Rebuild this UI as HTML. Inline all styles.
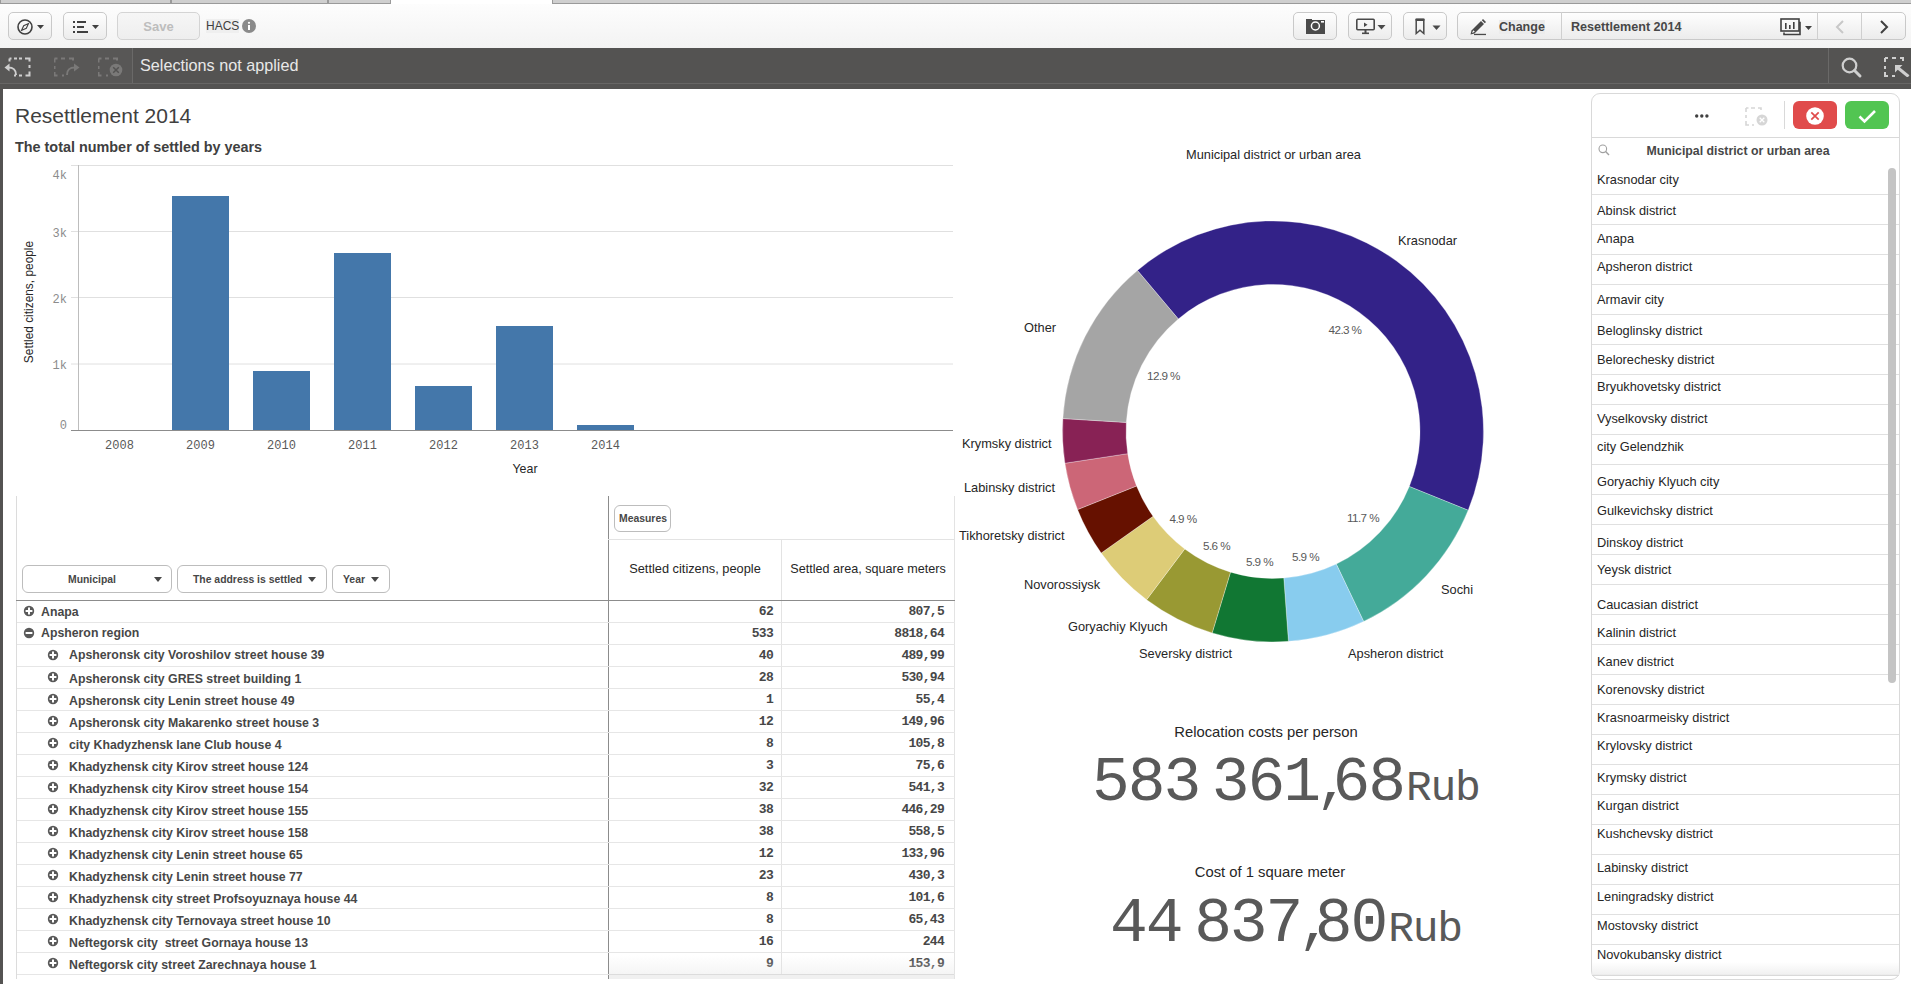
<!DOCTYPE html>
<html><head><meta charset="utf-8">
<style>
*{box-sizing:border-box;margin:0;padding:0}
html,body{width:1911px;height:984px;overflow:hidden;background:#fff;font-family:"Liberation Sans",sans-serif;color:#595959}
.a{position:absolute}
.tab{position:absolute;top:0;height:4px;background:#cfcfcf;border:1px solid #9a9a9a;border-top:none}
#tb{position:absolute;left:0;top:4px;width:1911px;height:44px;background:linear-gradient(#fdfdfd,#f3f3f3)}
.btn{position:absolute;top:12px;height:28px;border:1px solid #c9c9c9;border-radius:5px;background:linear-gradient(#fefefe,#ececec)}
.btn svg{position:absolute}
#sel{position:absolute;left:0;top:48px;width:1911px;height:41px;background:#545352}
.mono{font-family:"Liberation Mono",monospace}
</style></head><body>
<!-- tabs -->
<div class="tab" style="left:0;width:171px"></div>
<div class="tab" style="left:171px;width:157px"></div>
<div class="tab" style="left:328px;width:63px"></div>
<div class="tab" style="left:552px;width:1359px;border-right:none"></div>

<div id="tb"></div>
<!-- left buttons -->
<div class="btn" style="left:8px;width:44px">
 <svg style="left:8px;top:6px" width="30" height="16" viewBox="0 0 30 16"><circle cx="8" cy="8" r="7" fill="none" stroke="#404040" stroke-width="1.6"/><path d="M11.5 4.5 L9.3 9.3 L4.5 11.5 L6.7 6.7 Z" fill="none" stroke="#404040" stroke-width="1.1"/><path d="M20 6 h7 l-3.5 4z" fill="#404040"/></svg>
</div>
<div class="btn" style="left:63px;width:44px">
 <svg style="left:8px;top:6px" width="30" height="16" viewBox="0 0 30 16"><rect x="1" y="2" width="2" height="2" fill="#404040"/><rect x="5" y="2" width="9" height="2" fill="#404040"/><rect x="1" y="7" width="2" height="2" fill="#404040"/><rect x="5" y="7" width="7" height="2" fill="#404040"/><rect x="1" y="12" width="2" height="2" fill="#404040"/><rect x="5" y="12" width="11" height="2" fill="#404040"/><path d="M20 6 h7 l-3.5 4z" fill="#404040"/></svg>
</div>
<div class="btn" style="left:117px;width:83px;background:linear-gradient(#f6f6f6,#eeeeee);border-color:#d4d4d4"><div class="a" style="left:0;width:81px;top:6px;text-align:center;font-size:13px;font-weight:bold;color:#bdbdbd">Save</div></div>
<div class="a" style="left:206px;top:19px;font-size:12px;color:#404040;background:#efefef">HACS</div>
<svg class="a" style="left:242px;top:19px" width="14" height="14" viewBox="0 0 14 14"><circle cx="7" cy="7" r="7" fill="#8a8a8a"/><rect x="6" y="6" width="2" height="5" fill="#fff"/><circle cx="7" cy="3.8" r="1.1" fill="#fff"/></svg>

<!-- right buttons -->
<div class="btn" style="left:1293px;width:44px">
 <svg style="left:12px;top:5px" width="20" height="17" viewBox="0 0 20 17"><path d="M0 1 h6 v1 h13 v14 h-19z" fill="#4a4a4a"/><circle cx="9.4" cy="8" r="4" fill="none" stroke="#fff" stroke-width="1.5"/><rect x="15" y="3" width="3" height="1.6" fill="#fff"/></svg>
</div>
<div class="btn" style="left:1348px;width:44px">
 <svg style="left:7px;top:5px" width="30" height="17" viewBox="0 0 30 17"><rect x="0.8" y="1.2" width="17.4" height="10.6" rx="1" fill="none" stroke="#4a4a4a" stroke-width="1.6"/><path d="M8 4.5 v4.5 l3.5-2.25z" fill="#4a4a4a"/><rect x="8.5" y="12" width="2" height="3" fill="#4a4a4a"/><rect x="6" y="14.5" width="7" height="1.6" fill="#4a4a4a"/><path d="M21.5 7 h8 l-4 4.5z" fill="#4a4a4a"/></svg>
</div>
<div class="btn" style="left:1403px;width:44px">
 <svg style="left:10px;top:5px" width="30" height="17" viewBox="0 0 30 17"><path d="M2.2 1.5 h7.6 v14 l-3.8-3.2 l-3.8 3.2z" fill="none" stroke="#4a4a4a" stroke-width="1.5"/><rect x="1.5" y="0.5" width="9" height="2.5" rx="1" fill="#4a4a4a"/><path d="M18.5 7.5 h8 l-4 4.5z" fill="#4a4a4a"/></svg>
</div>
<div class="btn" style="left:1457px;width:449px">
 <div class="a" style="left:103px;top:-1px;width:1px;height:28px;background:#cfcfcf"></div>
 <div class="a" style="left:359px;top:-1px;width:1px;height:28px;background:#cfcfcf"></div>
 <div class="a" style="left:403px;top:-1px;width:1px;height:28px;background:#cfcfcf"></div>
 <svg style="left:11px;top:5px" width="18" height="18" viewBox="0 0 18 18"><path d="M1.5 16.5 L2.5 12.5 L12 3 L15 6 L5.5 15.5 Z" fill="#4a4a4a"/><path d="M12.8 2.2 L14 1 L17 4 L15.8 5.2 Z" fill="#4a4a4a"/><path d="M3 15 l1.2-2.8 l1.6 1.6z" fill="#fff"/><rect x="5" y="15.8" width="12" height="1.3" fill="#4a4a4a"/></svg>
 <div class="a" style="left:41px;top:7px;font-size:12.5px;font-weight:bold;color:#474747;background:#ececec">Change</div>
 <div class="a" style="left:113px;top:7px;font-size:12.6px;font-weight:bold;color:#474747;background:#efefef">Resettlement 2014</div>
 <svg style="left:322px;top:5px" width="34" height="18" viewBox="0 0 34 18"><rect x="1" y="1" width="18" height="12" fill="none" stroke="#404040" stroke-width="1.6"/><path d="M4 14.5 v2 h16 v-12 h-1" fill="none" stroke="#404040" stroke-width="1.6"/><rect x="5" y="5" width="1.6" height="6" fill="#404040"/><rect x="9" y="7" width="1.6" height="4" fill="#404040"/><rect x="13" y="4" width="1.6" height="7" fill="#404040"/><path d="M25 8 h7 l-3.5 4z" fill="#404040"/></svg>
 <svg style="left:375px;top:6px" width="14" height="16" viewBox="0 0 14 16"><path d="M10 2 L4 8 L10 14" fill="none" stroke="#c8c8c8" stroke-width="2"/></svg>
 <svg style="left:419px;top:6px" width="14" height="16" viewBox="0 0 14 16"><path d="M4 2 L10 8 L4 14" fill="none" stroke="#404040" stroke-width="2"/></svg>
</div>

<!-- selection bar -->
<div id="sel">
 <div class="a" style="left:0;top:0;width:132px;height:35px;background:#585756"></div>
 <div class="a" style="left:132px;top:0;width:1px;height:35px;background:#6a6968"></div>
 <div class="a" style="left:0;top:35px;width:1911px;height:1px;background:#676665"></div>
 <div class="a" style="left:1828px;top:0;width:1px;height:35px;background:#6a6968"></div>
 <div class="a" style="left:140px;top:8px;font-size:16.2px;color:#e8e8e8">Selections not applied</div>

 <svg class="a" style="left:4px;top:9px" width="28" height="20" viewBox="0 0 28 20"><path d="M10 1.5 h3 M15 1.5 h3 M21 1.5 h4.5 v3 M25.5 8 v3 M25.5 14.5 v4 h-4 M18 18.5 h-3 M10 18.5 h2 M5.5 1.5 h2" stroke="#cfcfcf" stroke-width="2" fill="none"/><path d="M5.5 1.5 v3" stroke="#cfcfcf" stroke-width="2"/><path d="M12 18 C12 12 9 10.5 4 10.5" fill="none" stroke="#cfcfcf" stroke-width="2"/><path d="M0.5 10.5 L5.5 6.5 L5.5 14.5 Z" fill="#cfcfcf"/></svg>
 <svg class="a" style="left:54px;top:9px" width="28" height="20" viewBox="0 0 28 20"><path d="M0.5 1.5 h3 M7 1.5 h4 M15 1.5 h4 v2 M0.5 1.5 v4 M0.5 9 v3 M0.5 15 v3.5 h3 M8 18.5 h2" stroke="#7a7978" stroke-width="2" fill="none"/><path d="M13 18 C13 12 16 10.5 21 10.5" fill="none" stroke="#7a7978" stroke-width="2"/><path d="M25.5 10.5 L20 6.5 L20 14.5 Z" fill="#7a7978"/></svg>
 <svg class="a" style="left:98px;top:9px" width="28" height="20" viewBox="0 0 28 20"><path d="M0.5 1.5 h3 M7 1.5 h4 M15 1.5 h4 v2 M0.5 1.5 v4 M0.5 9 v3 M0.5 15 v3.5 h3 M8 18.5 h2" stroke="#7a7978" stroke-width="2" fill="none"/><circle cx="18" cy="13" r="6.3" fill="#7a7978"/><path d="M15.2 10.2 l5.6 5.6 M20.8 10.2 l-5.6 5.6" stroke="#545352" stroke-width="1.5"/></svg>
 <svg class="a" style="left:1841px;top:9px" width="22" height="22" viewBox="0 0 22 22"><circle cx="8.5" cy="8.5" r="6.8" fill="none" stroke="#cfcfcf" stroke-width="2.2"/><path d="M13.5 13.5 L19 19" stroke="#cfcfcf" stroke-width="3" stroke-linecap="round"/></svg>
 <svg class="a" style="left:1884px;top:9px" width="27" height="20" viewBox="0 0 27 20"><path d="M1 1 h3 M8 1 h4 M16 1 h3 v3 M1 1 v4 M1 9 v3 M1 15 v4 h3 M8 19 h3" stroke="#cfcfcf" stroke-width="2" fill="none"/><path d="M11 8 L18.5 8 L11 15.5 Z" fill="#cfcfcf"/><path d="M13.5 10.5 L24.5 19.5" stroke="#cfcfcf" stroke-width="3"/></svg>
</div>

<!-- content -->
<div class="a" style="left:0;top:89px;width:3px;height:895px;background:#545352"></div>

<div class="a" style="left:15px;top:104px;font-size:21px;color:#404040;white-space:nowrap">Resettlement 2014</div>
<div class="a" style="left:15px;top:139px;font-size:14.4px;font-weight:bold;color:#404040;white-space:nowrap">The total number of settled by years</div>
<svg class="a" style="left:0;top:89px" width="960" height="400" viewBox="0 89 960 400">
<line x1="71" y1="165.5" x2="953" y2="165.5" stroke="#e0e0e0" stroke-width="1"/>
<line x1="71" y1="231.5" x2="953" y2="231.5" stroke="#e0e0e0" stroke-width="1"/>
<line x1="71" y1="297.5" x2="953" y2="297.5" stroke="#e0e0e0" stroke-width="1"/>
<line x1="71" y1="364" x2="953" y2="364" stroke="#e0e0e0" stroke-width="1"/>
<line x1="78.5" y1="165" x2="78.5" y2="430" stroke="#bdbdbd" stroke-width="1"/>
<line x1="71" y1="430.5" x2="953" y2="430.5" stroke="#8c8c8c" stroke-width="1"/>
<rect x="172" y="196" width="57" height="234" fill="#4477aa"/>
<rect x="253" y="371" width="57" height="59" fill="#4477aa"/>
<rect x="334" y="253" width="57" height="177" fill="#4477aa"/>
<rect x="415" y="386" width="57" height="44" fill="#4477aa"/>
<rect x="496" y="326" width="57" height="104" fill="#4477aa"/>
<rect x="577" y="425" width="57" height="5" fill="#4477aa"/>
</svg>
<div class="a mono" style="right:1844px;top:168px;font-size:12px;color:#8c8c8c;line-height:16px">4k</div>
<div class="a mono" style="right:1844px;top:226px;font-size:12px;color:#8c8c8c;line-height:16px">3k</div>
<div class="a mono" style="right:1844px;top:292px;font-size:12px;color:#8c8c8c;line-height:16px">2k</div>
<div class="a mono" style="right:1844px;top:358px;font-size:12px;color:#8c8c8c;line-height:16px">1k</div>
<div class="a mono" style="right:1844px;top:418px;font-size:12px;color:#8c8c8c;line-height:16px">0</div>
<div class="a mono" style="left:89.5px;width:60px;text-align:center;top:438px;font-size:12px;color:#595959;line-height:16px">2008</div>
<div class="a mono" style="left:170.5px;width:60px;text-align:center;top:438px;font-size:12px;color:#595959;line-height:16px">2009</div>
<div class="a mono" style="left:251.5px;width:60px;text-align:center;top:438px;font-size:12px;color:#595959;line-height:16px">2010</div>
<div class="a mono" style="left:332.5px;width:60px;text-align:center;top:438px;font-size:12px;color:#595959;line-height:16px">2011</div>
<div class="a mono" style="left:413.5px;width:60px;text-align:center;top:438px;font-size:12px;color:#595959;line-height:16px">2012</div>
<div class="a mono" style="left:494.5px;width:60px;text-align:center;top:438px;font-size:12px;color:#595959;line-height:16px">2013</div>
<div class="a mono" style="left:575.5px;width:60px;text-align:center;top:438px;font-size:12px;color:#595959;line-height:16px">2014</div>
<div class="a" style="left:485px;width:80px;text-align:center;top:461px;font-size:12.4px;color:#262626;line-height:16px">Year</div>
<div class="a" style="left:-41px;top:294px;width:140px;text-align:center;white-space:nowrap;font-size:11.9px;color:#262626;line-height:16px;transform:rotate(-90deg)">Settled citizens, people</div>
<style>.tl{position:absolute;font-size:12.3px;font-weight:bold;color:#474747;white-space:nowrap;line-height:16px}.tn{position:absolute;font-family:"Liberation Mono",monospace;font-size:13px;letter-spacing:-0.7px;font-weight:bold;color:#474747;text-align:right;line-height:18px;white-space:nowrap}.fb{position:absolute;top:565px;height:28px;border:1px solid #bdbdbd;border-radius:6px;background:#fff}.fb span{position:absolute;top:8px;font-size:10.4px;font-weight:bold;color:#474747;white-space:nowrap}</style>
<div class="a" style="left:16px;top:496px;width:1px;height:483px;background:#dcdcdc"></div>
<div class="a" style="left:608px;top:496px;width:1px;height:483px;background:#8c8c8c"></div>
<div class="a" style="left:954px;top:496px;width:1px;height:483px;background:#e3e3e3"></div>
<div class="a" style="left:608px;top:539px;width:346px;height:1px;background:#e3e3e3"></div>
<div class="a" style="left:781px;top:539px;width:1px;height:440px;background:#e3e3e3"></div>
<div class="a" style="left:16px;top:600px;width:939px;height:1px;background:#8c8c8c"></div>
<div class="fb" style="left:22px;width:150px"><span style="left:45px">Municipal</span><svg class="a" style="left:131px;top:11px" width="8" height="5" viewBox="0 0 8 5"><path d="M0 0h8l-4 5z" fill="#474747"/></svg></div>
<div class="fb" style="left:177px;width:150px"><span style="left:15px">The address is settled</span><svg class="a" style="left:130px;top:11px" width="8" height="5" viewBox="0 0 8 5"><path d="M0 0h8l-4 5z" fill="#474747"/></svg></div>
<div class="fb" style="left:332px;width:58px"><span style="left:10px">Year</span><svg class="a" style="left:38px;top:11px" width="8" height="5" viewBox="0 0 8 5"><path d="M0 0h8l-4 5z" fill="#474747"/></svg></div>
<div class="fb" style="left:614px;top:505px;width:57px;height:27px"><span style="left:4px;top:7px">Measures</span></div>
<div class="a" style="left:609px;top:561px;width:172px;text-align:center;font-size:12.8px;color:#262626;white-space:nowrap">Settled citizens, people</div>
<div class="a" style="left:782px;top:562px;width:172px;text-align:center;font-size:12.6px;color:#262626;white-space:nowrap">Settled area, square meters</div>
<div class="a" style="left:17px;top:622px;width:938px;height:1px;background:#e6e6e6"></div>
<svg class="a" style="left:23px;top:605px" width="12" height="12" viewBox="0 0 12 12"><circle cx="6" cy="6" r="5.2" fill="#595959"/><path d="M6 2.6v6.8M2.6 6h6.8" stroke="#fff" stroke-width="2"/></svg>
<div class="tl" style="left:41px;top:603.5px">Anapa</div>
<div class="tn" style="right:1138px;top:603px">62</div>
<div class="tn" style="right:967px;top:603px">807,5</div>
<div class="a" style="left:17px;top:644px;width:938px;height:1px;background:#e6e6e6"></div>
<svg class="a" style="left:23px;top:627px" width="12" height="12" viewBox="0 0 12 12"><circle cx="6" cy="6" r="5.2" fill="#595959"/><path d="M2.6 6h6.8" stroke="#fff" stroke-width="2"/></svg>
<div class="tl" style="left:41px;top:624.5px">Apsheron region</div>
<div class="tn" style="right:1138px;top:625px">533</div>
<div class="tn" style="right:967px;top:625px">8818,64</div>
<div class="a" style="left:17px;top:666px;width:938px;height:1px;background:#e6e6e6"></div>
<svg class="a" style="left:47px;top:649px" width="12" height="12" viewBox="0 0 12 12"><circle cx="6" cy="6" r="5.2" fill="#595959"/><path d="M6 2.6v6.8M2.6 6h6.8" stroke="#fff" stroke-width="2"/></svg>
<div class="tl" style="left:69px;top:646.5px">Apsheronsk city Voroshilov street house 39</div>
<div class="tn" style="right:1138px;top:647px">40</div>
<div class="tn" style="right:967px;top:647px">489,99</div>
<div class="a" style="left:17px;top:688px;width:938px;height:1px;background:#e6e6e6"></div>
<svg class="a" style="left:47px;top:671px" width="12" height="12" viewBox="0 0 12 12"><circle cx="6" cy="6" r="5.2" fill="#595959"/><path d="M6 2.6v6.8M2.6 6h6.8" stroke="#fff" stroke-width="2"/></svg>
<div class="tl" style="left:69px;top:671.3px">Apsheronsk city GRES street building 1</div>
<div class="tn" style="right:1138px;top:669px">28</div>
<div class="tn" style="right:967px;top:669px">530,94</div>
<div class="a" style="left:17px;top:710px;width:938px;height:1px;background:#e6e6e6"></div>
<svg class="a" style="left:47px;top:693px" width="12" height="12" viewBox="0 0 12 12"><circle cx="6" cy="6" r="5.2" fill="#595959"/><path d="M6 2.6v6.8M2.6 6h6.8" stroke="#fff" stroke-width="2"/></svg>
<div class="tl" style="left:69px;top:693.3px">Apsheronsk city Lenin street house 49</div>
<div class="tn" style="right:1138px;top:691px">1</div>
<div class="tn" style="right:967px;top:691px">55,4</div>
<div class="a" style="left:17px;top:732px;width:938px;height:1px;background:#e6e6e6"></div>
<svg class="a" style="left:47px;top:715px" width="12" height="12" viewBox="0 0 12 12"><circle cx="6" cy="6" r="5.2" fill="#595959"/><path d="M6 2.6v6.8M2.6 6h6.8" stroke="#fff" stroke-width="2"/></svg>
<div class="tl" style="left:69px;top:715.3px">Apsheronsk city Makarenko street house 3</div>
<div class="tn" style="right:1138px;top:713px">12</div>
<div class="tn" style="right:967px;top:713px">149,96</div>
<div class="a" style="left:17px;top:754px;width:938px;height:1px;background:#e6e6e6"></div>
<svg class="a" style="left:47px;top:737px" width="12" height="12" viewBox="0 0 12 12"><circle cx="6" cy="6" r="5.2" fill="#595959"/><path d="M6 2.6v6.8M2.6 6h6.8" stroke="#fff" stroke-width="2"/></svg>
<div class="tl" style="left:69px;top:737.3px">city Khadyzhensk lane Club house 4</div>
<div class="tn" style="right:1138px;top:735px">8</div>
<div class="tn" style="right:967px;top:735px">105,8</div>
<div class="a" style="left:17px;top:776px;width:938px;height:1px;background:#e6e6e6"></div>
<svg class="a" style="left:47px;top:759px" width="12" height="12" viewBox="0 0 12 12"><circle cx="6" cy="6" r="5.2" fill="#595959"/><path d="M6 2.6v6.8M2.6 6h6.8" stroke="#fff" stroke-width="2"/></svg>
<div class="tl" style="left:69px;top:759.3px">Khadyzhensk city Kirov street house 124</div>
<div class="tn" style="right:1138px;top:757px">3</div>
<div class="tn" style="right:967px;top:757px">75,6</div>
<div class="a" style="left:17px;top:798px;width:938px;height:1px;background:#e6e6e6"></div>
<svg class="a" style="left:47px;top:781px" width="12" height="12" viewBox="0 0 12 12"><circle cx="6" cy="6" r="5.2" fill="#595959"/><path d="M6 2.6v6.8M2.6 6h6.8" stroke="#fff" stroke-width="2"/></svg>
<div class="tl" style="left:69px;top:781.3px">Khadyzhensk city Kirov street house 154</div>
<div class="tn" style="right:1138px;top:779px">32</div>
<div class="tn" style="right:967px;top:779px">541,3</div>
<div class="a" style="left:17px;top:820px;width:938px;height:1px;background:#e6e6e6"></div>
<svg class="a" style="left:47px;top:803px" width="12" height="12" viewBox="0 0 12 12"><circle cx="6" cy="6" r="5.2" fill="#595959"/><path d="M6 2.6v6.8M2.6 6h6.8" stroke="#fff" stroke-width="2"/></svg>
<div class="tl" style="left:69px;top:803.3px">Khadyzhensk city Kirov street house 155</div>
<div class="tn" style="right:1138px;top:801px">38</div>
<div class="tn" style="right:967px;top:801px">446,29</div>
<div class="a" style="left:17px;top:842px;width:938px;height:1px;background:#e6e6e6"></div>
<svg class="a" style="left:47px;top:825px" width="12" height="12" viewBox="0 0 12 12"><circle cx="6" cy="6" r="5.2" fill="#595959"/><path d="M6 2.6v6.8M2.6 6h6.8" stroke="#fff" stroke-width="2"/></svg>
<div class="tl" style="left:69px;top:825.3px">Khadyzhensk city Kirov street house 158</div>
<div class="tn" style="right:1138px;top:823px">38</div>
<div class="tn" style="right:967px;top:823px">558,5</div>
<div class="a" style="left:17px;top:864px;width:938px;height:1px;background:#e6e6e6"></div>
<svg class="a" style="left:47px;top:847px" width="12" height="12" viewBox="0 0 12 12"><circle cx="6" cy="6" r="5.2" fill="#595959"/><path d="M6 2.6v6.8M2.6 6h6.8" stroke="#fff" stroke-width="2"/></svg>
<div class="tl" style="left:69px;top:847.3px">Khadyzhensk city Lenin street house 65</div>
<div class="tn" style="right:1138px;top:845px">12</div>
<div class="tn" style="right:967px;top:845px">133,96</div>
<div class="a" style="left:17px;top:886px;width:938px;height:1px;background:#e6e6e6"></div>
<svg class="a" style="left:47px;top:869px" width="12" height="12" viewBox="0 0 12 12"><circle cx="6" cy="6" r="5.2" fill="#595959"/><path d="M6 2.6v6.8M2.6 6h6.8" stroke="#fff" stroke-width="2"/></svg>
<div class="tl" style="left:69px;top:869.3px">Khadyzhensk city Lenin street house 77</div>
<div class="tn" style="right:1138px;top:867px">23</div>
<div class="tn" style="right:967px;top:867px">430,3</div>
<div class="a" style="left:17px;top:908px;width:938px;height:1px;background:#e6e6e6"></div>
<svg class="a" style="left:47px;top:891px" width="12" height="12" viewBox="0 0 12 12"><circle cx="6" cy="6" r="5.2" fill="#595959"/><path d="M6 2.6v6.8M2.6 6h6.8" stroke="#fff" stroke-width="2"/></svg>
<div class="tl" style="left:69px;top:891.3px">Khadyzhensk city street Profsoyuznaya house 44</div>
<div class="tn" style="right:1138px;top:889px">8</div>
<div class="tn" style="right:967px;top:889px">101,6</div>
<div class="a" style="left:17px;top:930px;width:938px;height:1px;background:#e6e6e6"></div>
<svg class="a" style="left:47px;top:913px" width="12" height="12" viewBox="0 0 12 12"><circle cx="6" cy="6" r="5.2" fill="#595959"/><path d="M6 2.6v6.8M2.6 6h6.8" stroke="#fff" stroke-width="2"/></svg>
<div class="tl" style="left:69px;top:913.3px">Khadyzhensk city Ternovaya street house 10</div>
<div class="tn" style="right:1138px;top:911px">8</div>
<div class="tn" style="right:967px;top:911px">65,43</div>
<div class="a" style="left:17px;top:952px;width:938px;height:1px;background:#e6e6e6"></div>
<svg class="a" style="left:47px;top:935px" width="12" height="12" viewBox="0 0 12 12"><circle cx="6" cy="6" r="5.2" fill="#595959"/><path d="M6 2.6v6.8M2.6 6h6.8" stroke="#fff" stroke-width="2"/></svg>
<div class="tl" style="left:69px;top:935.3px">Neftegorsk city&nbsp; street Gornaya house 13</div>
<div class="tn" style="right:1138px;top:933px">16</div>
<div class="tn" style="right:967px;top:933px">244</div>
<div class="a" style="left:17px;top:974px;width:938px;height:1px;background:#e6e6e6"></div>
<svg class="a" style="left:47px;top:957px" width="12" height="12" viewBox="0 0 12 12"><circle cx="6" cy="6" r="5.2" fill="#595959"/><path d="M6 2.6v6.8M2.6 6h6.8" stroke="#fff" stroke-width="2"/></svg>
<div class="tl" style="left:69px;top:957.3px">Neftegorsk city street Zarechnaya house 1</div>
<div class="tn" style="right:1138px;top:955px">9</div>
<div class="tn" style="right:967px;top:955px">153,9</div>
<div class="a" style="left:609px;top:955px;width:345px;height:24px;background:linear-gradient(rgba(255,255,255,0),rgba(230,230,230,0.5))"></div>
<div class="a" style="left:609px;top:974px;width:345px;height:5px;background:#f0f0f0;border-top:1px solid #dcdcdc"></div>
<svg class="a" style="left:955px;top:89px" width="630" height="620" viewBox="955 89 630 620">
<path d="M1137.41 270.38 A210.5 210.5 0 0 1 1468.17 510.25 L1409.30 486.47 A147 147 0 0 0 1178.31 318.96Z" fill="#332288" stroke="rgba(255,255,255,0.6)" stroke-width="0.5"/>
<path d="M1468.17 510.25 A210.5 210.5 0 0 1 1363.62 621.39 L1336.29 564.08 A147 147 0 0 0 1409.30 486.47Z" fill="#44aa99" stroke="rgba(255,255,255,0.6)" stroke-width="0.5"/>
<path d="M1363.62 621.39 A210.5 210.5 0 0 1 1288.42 641.33 L1283.77 578.01 A147 147 0 0 0 1336.29 564.08Z" fill="#88ccee" stroke="rgba(255,255,255,0.6)" stroke-width="0.5"/>
<path d="M1288.42 641.33 A210.5 210.5 0 0 1 1212.16 632.92 L1230.51 572.13 A147 147 0 0 0 1283.77 578.01Z" fill="#117733" stroke="rgba(255,255,255,0.6)" stroke-width="0.5"/>
<path d="M1212.16 632.92 A210.5 210.5 0 0 1 1146.61 599.73 L1184.74 548.95 A147 147 0 0 0 1230.51 572.13Z" fill="#999933" stroke="rgba(255,255,255,0.6)" stroke-width="0.5"/>
<path d="M1146.61 599.73 A210.5 210.5 0 0 1 1101.20 553.04 L1153.03 516.35 A147 147 0 0 0 1184.74 548.95Z" fill="#ddcc77" stroke="rgba(255,255,255,0.6)" stroke-width="0.5"/>
<path d="M1101.20 553.04 A210.5 210.5 0 0 1 1077.55 509.57 L1136.51 485.99 A147 147 0 0 0 1153.03 516.35Z" fill="#661100" stroke="rgba(255,255,255,0.6)" stroke-width="0.5"/>
<path d="M1077.55 509.57 A210.5 210.5 0 0 1 1064.92 463.24 L1127.69 453.64 A147 147 0 0 0 1136.51 485.99Z" fill="#cc6677" stroke="rgba(255,255,255,0.6)" stroke-width="0.5"/>
<path d="M1064.92 463.24 A210.5 210.5 0 0 1 1062.89 418.55 L1126.27 422.43 A147 147 0 0 0 1127.69 453.64Z" fill="#882255" stroke="rgba(255,255,255,0.6)" stroke-width="0.5"/>
<path d="M1062.89 418.55 A210.5 210.5 0 0 1 1137.41 270.38 L1178.31 318.96 A147 147 0 0 0 1126.27 422.43Z" fill="#a5a5a5" stroke="rgba(255,255,255,0.6)" stroke-width="0.5"/>
</svg>
<div class="a" style="left:1123.5px;width:300px;text-align:center;top:146px;font-size:12.8px;color:#262626;line-height:18px;white-space:nowrap">Municipal district or urban area</div>
<div class="a" style="left:1398px;top:232px;font-size:12.8px;color:#262626;line-height:18px;white-space:nowrap">Krasnodar</div>
<div class="a" style="left:1024px;top:319px;font-size:12.8px;color:#262626;line-height:18px;white-space:nowrap">Other</div>
<div class="a" style="left:962px;top:435px;font-size:12.8px;color:#262626;line-height:18px;white-space:nowrap">Krymsky district</div>
<div class="a" style="left:964px;top:479px;font-size:12.8px;color:#262626;line-height:18px;white-space:nowrap">Labinsky district</div>
<div class="a" style="left:959px;top:527px;font-size:12.8px;color:#262626;line-height:18px;white-space:nowrap">Tikhoretsky district</div>
<div class="a" style="left:1024px;top:576px;font-size:12.8px;color:#262626;line-height:18px;white-space:nowrap">Novorossiysk</div>
<div class="a" style="left:1068px;top:618px;font-size:12.8px;color:#262626;line-height:18px;white-space:nowrap">Goryachiy Klyuch</div>
<div class="a" style="left:1139px;top:645px;font-size:12.8px;color:#262626;line-height:18px;white-space:nowrap">Seversky district</div>
<div class="a" style="left:1348px;top:645px;font-size:12.8px;color:#262626;line-height:18px;white-space:nowrap">Apsheron district</div>
<div class="a" style="left:1441px;top:581px;font-size:12.8px;color:#262626;line-height:18px;white-space:nowrap">Sochi</div>
<div class="a" style="left:1305px;width:80px;text-align:center;top:322px;font-size:11.7px;letter-spacing:-0.6px;color:#595959;line-height:16px;white-space:nowrap">42.3 %</div>
<div class="a" style="left:1123.5px;width:80px;text-align:center;top:368px;font-size:11.7px;letter-spacing:-0.6px;color:#595959;line-height:16px;white-space:nowrap">12.9 %</div>
<div class="a" style="left:1143px;width:80px;text-align:center;top:511px;font-size:11.7px;letter-spacing:-0.6px;color:#595959;line-height:16px;white-space:nowrap">4.9 %</div>
<div class="a" style="left:1176.5px;width:80px;text-align:center;top:538px;font-size:11.7px;letter-spacing:-0.6px;color:#595959;line-height:16px;white-space:nowrap">5.6 %</div>
<div class="a" style="left:1219.5px;width:80px;text-align:center;top:554px;font-size:11.7px;letter-spacing:-0.6px;color:#595959;line-height:16px;white-space:nowrap">5.9 %</div>
<div class="a" style="left:1265.5px;width:80px;text-align:center;top:549px;font-size:11.7px;letter-spacing:-0.6px;color:#595959;line-height:16px;white-space:nowrap">5.9 %</div>
<div class="a" style="left:1323px;width:80px;text-align:center;top:510px;font-size:11.7px;letter-spacing:-0.6px;color:#595959;line-height:16px;white-space:nowrap">11.7 %</div>
<div class="a" style="left:1116px;width:300px;text-align:center;top:722px;font-size:14.8px;color:#262626;line-height:20px;white-space:nowrap">Relocation costs per person</div>
<div class="a" style="left:1120px;width:300px;text-align:center;top:862px;font-size:14.8px;color:#262626;line-height:20px;white-space:nowrap">Cost of 1 square meter</div>
<div class="a mono" style="left:1092px;top:749px;font-size:63px;letter-spacing:-2.1px;color:#595959;line-height:70px;white-space:nowrap">583<span style="margin-left:-23px"> </span>361<span style="margin:0 -15px 0 -3px;font-size:56px">,</span>68<span style="font-size:43px;letter-spacing:-1.3px;margin-left:2px">Rub</span></div>
<div class="a mono" style="left:1110px;top:890px;font-size:63px;letter-spacing:-2.1px;color:#595959;line-height:70px;white-space:nowrap">44<span style="margin-left:-23px"> </span>837<span style="margin:0 -15px 0 -3px;font-size:56px">,</span>80<span style="font-size:43px;letter-spacing:-1.3px;margin-left:2px">Rub</span></div>
<div class="a" style="left:1591px;top:93px;width:309px;height:887px;border:1px solid #d9d9d9;border-radius:9px;background:#fff;overflow:hidden">
 <div class="a" style="left:0;top:43px;width:307px;height:1px;background:#d9d9d9"></div>
</div>
<svg class="a" style="left:1694px;top:113px" width="16" height="6" viewBox="0 0 16 6"><circle cx="2.7" cy="3" r="1.7" fill="#404040"/><circle cx="7.8" cy="3" r="1.7" fill="#404040"/><circle cx="12.9" cy="3" r="1.7" fill="#404040"/></svg>
<svg class="a" style="left:1745px;top:107px" width="24" height="21" viewBox="0 0 24 21"><path d="M1 1h2.5M6 1h4M13 1h3v2M1 1v4M1 8v3M1 14v4h3M7 18h2" stroke="#d6d6d6" stroke-width="1.6" fill="none"/><circle cx="17" cy="13" r="5.5" fill="#d6d6d6"/><path d="M14.7 10.7l4.6 4.6M19.3 10.7l-4.6 4.6" stroke="#fff" stroke-width="1.3"/></svg>
<div class="a" style="left:1784px;top:101px;width:1px;height:28px;background:#d9d9d9"></div>
<div class="a" style="left:1793px;top:101px;width:44px;height:28px;border-radius:6px;background:#e04b4b"></div>
<svg class="a" style="left:1806px;top:107px" width="18" height="18" viewBox="0 0 18 18"><circle cx="9" cy="9" r="8.8" fill="#fff"/><path d="M5.3 5.3l7.4 7.4M12.7 5.3l-7.4 7.4" stroke="#e04b4b" stroke-width="1.7"/></svg>
<div class="a" style="left:1845px;top:101px;width:44px;height:28px;border-radius:6px;background:#52c552"></div>
<svg class="a" style="left:1858px;top:109px" width="19" height="15" viewBox="0 0 19 15"><path d="M1.5 7.5l5 5L17 2" stroke="#fff" stroke-width="2.6" fill="none"/></svg>
<svg class="a" style="left:1598px;top:144px" width="12" height="12" viewBox="0 0 12 12"><circle cx="4.8" cy="4.8" r="3.8" fill="none" stroke="#a0a0a0" stroke-width="1.1"/><path d="M7.6 7.6L11 11" stroke="#a0a0a0" stroke-width="1.4"/></svg>
<div class="a" style="left:1592px;width:292px;text-align:center;top:142px;font-size:12.3px;font-weight:bold;color:#474747;line-height:18px;white-space:nowrap">Municipal district or urban area</div>
<div class="a" style="left:1592px;top:194px;width:307px;height:1px;background:#e0e0e0"></div>
<div class="a" style="left:1597px;top:170.5px;font-size:12.8px;color:#262626;line-height:18px;white-space:nowrap">Krasnodar city</div>
<div class="a" style="left:1592px;top:224px;width:307px;height:1px;background:#e0e0e0"></div>
<div class="a" style="left:1597px;top:201.7px;font-size:12.8px;color:#262626;line-height:18px;white-space:nowrap">Abinsk district</div>
<div class="a" style="left:1592px;top:254px;width:307px;height:1px;background:#e0e0e0"></div>
<div class="a" style="left:1597px;top:230.3px;font-size:12.8px;color:#262626;line-height:18px;white-space:nowrap">Anapa</div>
<div class="a" style="left:1592px;top:284px;width:307px;height:1px;background:#e0e0e0"></div>
<div class="a" style="left:1597px;top:257.6px;font-size:12.8px;color:#262626;line-height:18px;white-space:nowrap">Apsheron district</div>
<div class="a" style="left:1592px;top:314px;width:307px;height:1px;background:#e0e0e0"></div>
<div class="a" style="left:1597px;top:290.5px;font-size:12.8px;color:#262626;line-height:18px;white-space:nowrap">Armavir city</div>
<div class="a" style="left:1592px;top:344px;width:307px;height:1px;background:#e0e0e0"></div>
<div class="a" style="left:1597px;top:321.7px;font-size:12.8px;color:#262626;line-height:18px;white-space:nowrap">Beloglinsky district</div>
<div class="a" style="left:1592px;top:374px;width:307px;height:1px;background:#e0e0e0"></div>
<div class="a" style="left:1597px;top:350.5px;font-size:12.8px;color:#262626;line-height:18px;white-space:nowrap">Belorechesky district</div>
<div class="a" style="left:1592px;top:404px;width:307px;height:1px;background:#e0e0e0"></div>
<div class="a" style="left:1597px;top:377.8px;font-size:12.8px;color:#262626;line-height:18px;white-space:nowrap">Bryukhovetsky district</div>
<div class="a" style="left:1592px;top:434px;width:307px;height:1px;background:#e0e0e0"></div>
<div class="a" style="left:1597px;top:410.0px;font-size:12.8px;color:#262626;line-height:18px;white-space:nowrap">Vyselkovsky district</div>
<div class="a" style="left:1592px;top:464px;width:307px;height:1px;background:#e0e0e0"></div>
<div class="a" style="left:1597px;top:437.8px;font-size:12.8px;color:#262626;line-height:18px;white-space:nowrap">city Gelendzhik</div>
<div class="a" style="left:1592px;top:494px;width:307px;height:1px;background:#e0e0e0"></div>
<div class="a" style="left:1597px;top:472.7px;font-size:12.8px;color:#262626;line-height:18px;white-space:nowrap">Goryachiy Klyuch city</div>
<div class="a" style="left:1592px;top:524px;width:307px;height:1px;background:#e0e0e0"></div>
<div class="a" style="left:1597px;top:502.0px;font-size:12.8px;color:#262626;line-height:18px;white-space:nowrap">Gulkevichsky district</div>
<div class="a" style="left:1592px;top:554px;width:307px;height:1px;background:#e0e0e0"></div>
<div class="a" style="left:1597px;top:533.7px;font-size:12.8px;color:#262626;line-height:18px;white-space:nowrap">Dinskoy district</div>
<div class="a" style="left:1592px;top:584px;width:307px;height:1px;background:#e0e0e0"></div>
<div class="a" style="left:1597px;top:560.5px;font-size:12.8px;color:#262626;line-height:18px;white-space:nowrap">Yeysk district</div>
<div class="a" style="left:1592px;top:614px;width:307px;height:1px;background:#e0e0e0"></div>
<div class="a" style="left:1597px;top:595.9px;font-size:12.8px;color:#262626;line-height:18px;white-space:nowrap">Caucasian district</div>
<div class="a" style="left:1592px;top:644px;width:307px;height:1px;background:#e0e0e0"></div>
<div class="a" style="left:1597px;top:624.0px;font-size:12.8px;color:#262626;line-height:18px;white-space:nowrap">Kalinin district</div>
<div class="a" style="left:1592px;top:674px;width:307px;height:1px;background:#e0e0e0"></div>
<div class="a" style="left:1597px;top:653.0px;font-size:12.8px;color:#262626;line-height:18px;white-space:nowrap">Kanev district</div>
<div class="a" style="left:1592px;top:704px;width:307px;height:1px;background:#e0e0e0"></div>
<div class="a" style="left:1597px;top:681.0px;font-size:12.8px;color:#262626;line-height:18px;white-space:nowrap">Korenovsky district</div>
<div class="a" style="left:1592px;top:734px;width:307px;height:1px;background:#e0e0e0"></div>
<div class="a" style="left:1597px;top:709.0px;font-size:12.8px;color:#262626;line-height:18px;white-space:nowrap">Krasnoarmeisky district</div>
<div class="a" style="left:1592px;top:764px;width:307px;height:1px;background:#e0e0e0"></div>
<div class="a" style="left:1597px;top:737.0px;font-size:12.8px;color:#262626;line-height:18px;white-space:nowrap">Krylovsky district</div>
<div class="a" style="left:1592px;top:794px;width:307px;height:1px;background:#e0e0e0"></div>
<div class="a" style="left:1597px;top:768.8px;font-size:12.8px;color:#262626;line-height:18px;white-space:nowrap">Krymsky district</div>
<div class="a" style="left:1592px;top:824px;width:307px;height:1px;background:#e0e0e0"></div>
<div class="a" style="left:1597px;top:796.9px;font-size:12.8px;color:#262626;line-height:18px;white-space:nowrap">Kurgan district</div>
<div class="a" style="left:1592px;top:854px;width:307px;height:1px;background:#e0e0e0"></div>
<div class="a" style="left:1597px;top:824.9px;font-size:12.8px;color:#262626;line-height:18px;white-space:nowrap">Kushchevsky district</div>
<div class="a" style="left:1592px;top:884px;width:307px;height:1px;background:#e0e0e0"></div>
<div class="a" style="left:1597px;top:859.0px;font-size:12.8px;color:#262626;line-height:18px;white-space:nowrap">Labinsky district</div>
<div class="a" style="left:1592px;top:914px;width:307px;height:1px;background:#e0e0e0"></div>
<div class="a" style="left:1597px;top:887.9px;font-size:12.8px;color:#262626;line-height:18px;white-space:nowrap">Leningradsky district</div>
<div class="a" style="left:1592px;top:944px;width:307px;height:1px;background:#e0e0e0"></div>
<div class="a" style="left:1597px;top:916.9px;font-size:12.8px;color:#262626;line-height:18px;white-space:nowrap">Mostovsky district</div>
<div class="a" style="left:1592px;top:974px;width:307px;height:1px;background:#e0e0e0"></div>
<div class="a" style="left:1597px;top:946.0px;font-size:12.8px;color:#262626;line-height:18px;white-space:nowrap">Novokubansky district</div>
<div class="a" style="left:1592px;top:962px;width:307px;height:13px;background:linear-gradient(rgba(255,255,255,0),rgba(238,238,238,0.9))"></div>
<div class="a" style="left:1592px;top:975px;width:307px;height:1px;background:#d9d9d9"></div>
<div class="a" style="left:1888px;top:168px;width:8px;height:515px;border-radius:4px;background:#c4c4c4"></div>
</body></html>
